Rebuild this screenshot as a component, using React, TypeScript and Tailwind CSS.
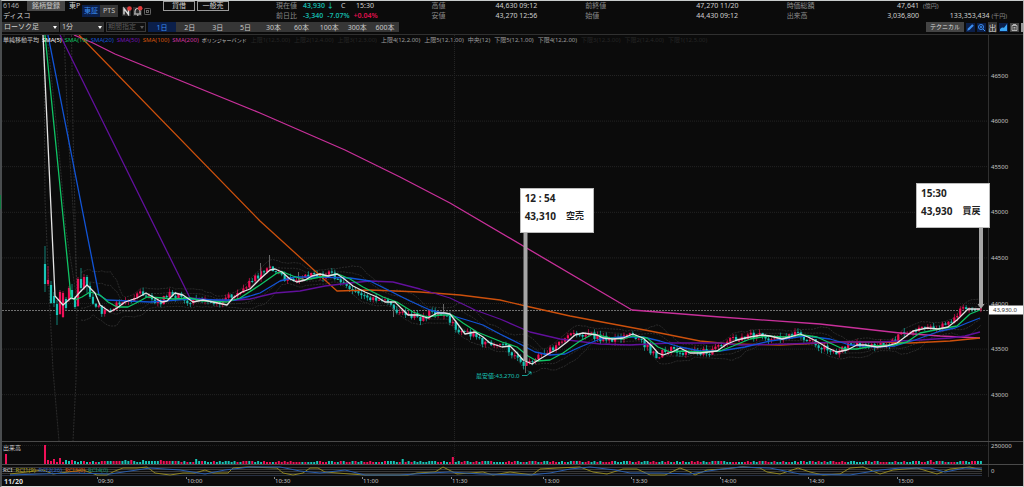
// Intraday chart screen: quote header, toolbar, candles with SMA / Bollinger, volume and RCI panes
import { useState } from 'react'
import clsx from 'clsx'

type Pt = [number, number]
const pts = (s: string): Pt[] => s.split(' ').map(p => p.split(',').map(Number) as Pt)

// Moving averages, in chart units
const SMA5 = '43,35 55,296 63,305 71,298 74,299 80,292 87,285 95,293 100,305 110,312 117,308 125,302 137,298 146,293 153,297 162,302 167,301 175,293 183,295 193,302 203,300 213,302 227,305 233,298 242,292 250,289 260,279 270,270 275,269 282,272 290,279 297,282 305,280 312,276 320,274 328,276 337,274 343,278 353,286 365,292 377,297 385,302 395,302 402,309 408,315 418,315 428,318 437,313 445,313 450,314 457,323 465,334 475,332 483,337 490,343 502,347 510,346 517,353 523,360 532,364 540,359 550,353 558,349 567,342 575,335 583,333 597,335 603,338 613,339 623,338 633,334 643,338 652,346 658,353 663,355 672,352 680,348 690,353 700,353 717,351 727,344 737,340 750,337 762,335 770,336 782,339 790,337 800,334 808,337 818,342 828,348 837,352 847,350 857,345 865,345 877,347 887,346 897,343 905,337 913,331 927,328 938,329 948,327 957,320 968,309 980,309'
const SMA10 = '45,35 71,297 75,300 82,297 90,292 100,295 108,302 117,307 128,307 138,302 147,297 163,298 173,299 190,298 203,301 227,302 240,298 260,285 277,273 283,272 293,276 305,280 320,277 338,274 350,279 363,287 383,297 397,302 413,312 427,317 440,315 452,315 463,323 477,332 502,342 517,347 528,356 537,361 550,360 563,353 580,341 593,334 610,338 623,339 633,336 647,338 658,347 670,352 683,351 700,352 720,351 733,346 750,339 767,336 783,337 803,335 817,337 830,343 843,349 857,349 873,346 893,345 907,342 920,333 940,329 957,326 970,314 980,310'
const SMA20 = '48,35 99,295 107,300 150,302 190,299 215,300 235,300 250,296 260,293 280,281 295,277 320,277 350,278 370,281 390,291 410,301 430,310 450,315 470,321 483,325 500,334 520,344 535,352 550,355 565,354 580,347 600,339 620,337 643,337 660,341 680,347 700,351 720,351 745,347 770,341 805,336 830,339 850,345 875,347 895,346 915,340 940,331 955,328 967,323 980,318'
const SMA50 = '60,35 190,298 225,301 250,299 275,293 300,291 325,286 350,283 370,281 393,282 420,289 450,298 475,310 500,319 530,332 560,339 600,344 630,345 670,343 720,343 740,345 790,344 840,342 880,342 920,340 950,338 965,336 980,332'
const SMA100 = '79,35 260,221 337,291 370,290 420,292 460,295 500,300 530,307 570,316 650,331 700,341 730,344 780,345 840,342 880,342 910,343 950,341 980,338'
const SMA200 = '74,35 93,43 115,54 260,113 345,150 400,177 450,203 632,310 720,317 820,324 900,333 940,336 980,338'

const RCI_FAST = '10,474 43,470 53,474 83,470 97,475 107,475 115,471 123,468 137,468 147,467 155,473 170,475 183,473 195,473 205,470 213,473 228,473 233,468 247,467 277,468 283,473 293,475 303,473 310,468 318,468 325,472 350,474 365,475 408,475 417,473 435,472 443,467 457,474 483,472 493,475 510,472 532,475 540,469 557,468 580,467 593,472 607,474 623,469 637,469 650,475 665,475 680,468 688,471 695,475 707,470 723,469 743,467 760,468 767,472 780,474 798,468 810,472 823,475 840,474 850,468 863,467 880,474 893,470 917,468 937,474 950,469 970,467 982,470'
const RCI_SLOW = '10,475 40,474 75,473 110,474 130,471 150,468 180,470 205,474 225,470 250,467 280,467 300,471 320,473 345,470 365,475 400,475 430,473 450,472 480,474 530,475 550,473 570,469 590,467 615,470 630,473 660,473 690,474 715,470 740,467 770,468 800,474 850,475 880,470 900,468 930,468 945,472 965,468 982,469'

const LINES = [
  { d: SMA200, color: '#c8309a' },
  { d: SMA100, color: '#cc500c' },
  { d: SMA50, color: '#62109c' },
  { d: SMA20, color: '#1254d6' },
  { d: SMA10, color: '#10c465' },
  { d: SMA5, color: '#e4e4e4' },
]

const UP = '#f01058'
const DOWN = '#18c4b6'

const noise = (n: number) => { const v = Math.sin(n * 127.1 + 11.7) * 43758.5453; return v - Math.floor(v) }
const at = (line: Pt[], x: number) => {
  const i = line.findIndex(p => p[0] >= x)
  if (i < 0) return line[line.length - 1][1]
  if (i === 0) return line[0][1]
  const [a, b] = [line[i - 1], line[i]]
  return a[1] + ((b[1] - a[1]) * (x - a[0])) / (b[0] - a[0])
}

type Candle = { x: number; open: number; close: number; top: number; bottom: number }

// The opening minutes swing too widely to be derived from the average
const OPENING: Candle[] = [
  { x: 45, open: 264, close: 284, top: 246, bottom: 292 },
  { x: 48, open: 284, close: 280, top: 266, bottom: 286 },
  { x: 51, open: 285, close: 303, top: 281, bottom: 304 },
  { x: 54, open: 296, close: 303, top: 292, bottom: 307 },
  { x: 57, open: 304, close: 315, top: 300, bottom: 325 },
  { x: 60, open: 314, close: 292, top: 290, bottom: 315 },
  { x: 63, open: 317, close: 293, top: 291, bottom: 318 },
  { x: 66, open: 299, close: 308, top: 297, bottom: 310 },
  { x: 69, open: 300, close: 288, top: 286, bottom: 302 },
  { x: 72, open: 290, close: 298, top: 284, bottom: 300 },
  { x: 75, open: 298, close: 307, top: 296, bottom: 309 },
  { x: 78, open: 306, close: 279, top: 277, bottom: 307 },
  { x: 81, open: 279, close: 288, top: 268, bottom: 292 },
  { x: 84, open: 288, close: 277, top: 274, bottom: 290 },
  { x: 87, open: 277, close: 286, top: 275, bottom: 293 },
]

const buildCandles = () => {
  const line = pts(SMA5)
  const out = [...OPENING]
  let prev = 286
  for (let i = 0; i <= 302; i++) {
    const x = 90 + i * 2.95
    if (x > 981) break
    const swing = x > 966 ? 1 : 7
    const close = at(line, x + 6) + (noise(i) - 0.5) * swing
    const hi = Math.min(prev, close)
    const lo = Math.max(prev, close)
    out.push({ x, open: prev, close, top: hi - noise(i + 400) * 4, bottom: lo + noise(i + 800) * 4 })
    prev = close
  }
  return out
}
const CANDLES = buildCandles()

// Bollinger bands over 12 closes
const band = (k: number) => CANDLES.slice(12).map((c, i) => {
  const win = CANDLES.slice(i + 1, i + 13).map(w => w.close)
  const mean = win.reduce((a, b) => a + b, 0) / win.length
  const sd = Math.sqrt(win.reduce((a, b) => a + (b - mean) ** 2, 0) / win.length)
  return `${c.x.toFixed(1)},${(mean + k * (sd + 1)).toFixed(1)}`
}).join(' ')
const BANDS = [-2, -1, 1, 2].map(band)

const TALL: Record<number, number> = { 0: 19, 3: 5, 5: 6, 138: 7, 51: 5, 121: 5, 300: 4 }
const PRICES = [46500, 46000, 45500, 45000, 44500, 44000, 43500, 43000]
const priceY = (p: number) => 75.5 + ((46500 - p) / 500) * 45.6

const TIMES = [
  ['09:30', 97], ['10:00', 186], ['10:30', 274], ['11:00', 362], ['11:30', 451],
  ['13:00', 543], ['13:30', 631], ['14:00', 720], ['14:30', 808], ['15:00', 897],
] as const

const PERIODS = ['1日', '2日', '3日', '5日', '30本', '60本', '100本', '300本', '600本']

const SMA_LEGEND = [
  ['単純移動平均', 'text-[#c4c4c4]'],
  ['SMA(5)', 'text-white'],
  ['SMA(10)', 'text-[#10c465]'],
  ['SMA(20)', 'text-[#1254d6]'],
  ['SMA(50)', 'text-[#7014b4]'],
  ['SMA(100)', 'text-[#d9560c]'],
  ['SMA(200)', 'text-[#d033a0]'],
  ['ボリンジャーバンド', 'text-[5px] text-[#c4c4c4]'],
]
const BAND_LEGEND = [
  ['上限1(12,5.00)', 'text-[#262626]'],
  ['上限2(12,4.00)', 'text-[#262626]'],
  ['上限3(12,3.00)', 'text-[#262626]'],
  ['上限4(12,2.00)', 'text-[#9c9c9c]'],
  ['上限5(12,1.00)', 'text-[#9c9c9c]'],
  ['中央(12)', 'text-[#9c9c9c]'],
  ['下限5(12,1.00)', 'text-[#9c9c9c]'],
  ['下限4(12,2.00)', 'text-[#9c9c9c]'],
  ['下限3(12,3.00)', 'text-[#262626]'],
  ['下限2(12,4.00)', 'text-[#262626]'],
  ['下限1(12,5.00)', 'text-[#262626]'],
]

const Label = ({ children }: { children: string }) => <dt className="text-[#8a8a8a]">{children}</dt>

function Quote() {
  return (
    <div className="grid flex-1 grid-cols-[156fr_154fr_202fr_237fr] text-[7px] leading-[10px] text-[#d0d0d0]">
      <dl className="grid grid-cols-[27px_1fr]">
        <Label>現在値</Label>
        <dd className="flex text-[#14b5a8]"><b className="w-[38px] font-semibold">43,930 ↓</b><span className="w-[15px] text-[#d0d0d0]">C</span><span className="text-[#d0d0d0]">15:30</span></dd>
        <Label>前日比</Label>
        <dd className="flex gap-1 font-semibold text-[#14b5a8]"><span>-3,340</span><span>-7.07%</span><span className="text-[#e0104f]">+0.04%</span></dd>
      </dl>
      <dl className="grid grid-cols-[1fr_auto] pr-12">
        <Label>高値</Label><dd>44,630 09:12</dd>
        <Label>安値</Label><dd>43,270 12:56</dd>
      </dl>
      <dl className="grid grid-cols-[1fr_auto] pr-12">
        <Label>前終値</Label><dd>47,270 11/20</dd>
        <Label>始値</Label><dd>44,430 09:12</dd>
      </dl>
      <dl className="grid grid-cols-[1fr_auto_84px] gap-x-1 pr-4">
        <Label>時価総額</Label><dd className="text-right">47,641</dd><dd className="text-[6px] text-[#8a8a8a]">(億円)</dd>
        <Label>出来高</Label><dd className="text-right">3,036,800</dd>
        <dd className="text-right">133,353,434 <span className="text-[6px] text-[#8a8a8a]">(千円)</span></dd>
      </dl>
    </div>
  )
}

function Header() {
  const [market, setMarket] = useState('東証')
  return (
    <div className="flex h-5 text-[7px] leading-[10px]">
      <div className="w-20 shrink-0 pl-px">
        <div className="flex">
          <span className="w-6 text-[#a8a8a8]">6146</span>
          <button className="h-[10px] w-[38px] bg-[#484848] text-[#c4c4c4]">銘柄登録</button>
          <span className="ml-1 whitespace-nowrap">東P</span>
        </div>
        <div>ディスコ</div>
      </div>
      <div className="mt-1 flex h-3 shrink-0 items-center">
        {['東証', 'PTS'].map(m => (
          <button key={m} onClick={() => setMarket(m)} className={clsx('h-3 w-[18px]', m === market ? 'bg-[#0b1f4a] text-[#3b8ef0]' : 'bg-[#363636] text-[#c4c4c4]')}>{m}</button>
        ))}
        <button aria-label="ニュース" className="ml-1">
          <svg width="10" height="10" viewBox="0 0 10 10" className="block">
            <rect y="1" width="9" height="9" fill="#2c2c2c" />
            <path d="M2 8.5V2.5L6.500 8.5V2.5" fill="none" stroke="#ddd" strokeWidth="1.4" />
            <circle cx="7.5" cy="2.5" r="2.3" fill="#e23b3b" />
          </svg>
        </button>
        <button aria-label="アラート" className="ml-px">
          <svg width="10" height="10" viewBox="0 0 10 10" className="block">
            <rect y="1" width="9" height="9" fill="#2c2c2c" />
            <path d="M1 8H8M2 7.5V5A2.5 2.5 0 0 1 7 5V7.5M4 9.2H5.4" fill="none" stroke="#ddd" />
            <circle cx="7.2" cy="2.3" r="2.3" fill="#e23b3b" />
          </svg>
        </button>
        <button aria-label="設定" className="ml-px">
          <svg width="7" height="7" viewBox="0 0 8 8" className="block" fill="none" stroke="#777">
            <rect x="0.5" y="0.5" width="7" height="7" rx="1" /><rect x="2.8" y="2.8" width="2.4" height="2.4" />
          </svg>
        </button>
      </div>
      <div className="ml-3 flex w-[113px] shrink-0 items-start gap-0.5">
        <button className="h-[10px] w-8 border border-[#9a9a9a] leading-[8px]">貸借</button>
        <button className="h-[10px] w-8 border border-[#9a9a9a] leading-[8px]">一般売</button>
      </div>
      <Quote />
    </div>
  )
}

function Picker({ label, value, className, disabled }: { label: string; value: string; className: string; disabled?: boolean }) {
  return (
    <div className={clsx('relative h-[10px]', className)}>
      <select aria-label={label} disabled={disabled}
        className={clsx('block h-[10px] w-full appearance-none border pl-px text-[7px] leading-[8px] opacity-100', disabled ? 'border-[#3a3a3a] bg-[#101010] text-[#5a5a5a]' : 'border-[#333333] bg-[#303030] text-[#d0d0d0]')}>
        <option>{value}</option>
      </select>
      <svg viewBox="0 0 4 3" className={clsx('pointer-events-none absolute top-1 right-0.5 h-[3px] w-1', disabled ? 'fill-[#5a5a5a]' : 'fill-white')}><path d="M0 0H4L2 3Z" /></svg>
    </div>
  )
}

function Toolbar() {
  const [period, setPeriod] = useState('1日')
  return (
    <div className="flex h-[13px] items-start pt-px text-[7px] leading-[9px]">
      <Picker label="チャート種別" value="ローソク足" className="w-[57px]" />
      <Picker label="足種" value="1分" className="ml-px w-11" />
      <Picker label="期間指定" value="期間指定" className="ml-0.5 w-10" disabled />
      <div className="ml-0.5 grid w-[251px] grid-cols-9">
        {PERIODS.map(p => (
          <button key={p} onClick={() => setPeriod(p)} className={clsx('h-[10px]', p === period ? 'bg-[#0b1f4a] text-[#3b8ef0]' : 'bg-[#363636] text-[#c8c8c8]')}>{p}</button>
        ))}
      </div>
      <div className="ml-auto flex items-center gap-0.5">
        <button className="h-[10px] w-[38px] bg-[#444444] text-[6px] text-[#dddddd]">テクニカル</button>
        <button aria-label="描画">
          <svg width="9" height="9" viewBox="0 0 9 9" className="block"><rect width="9" height="9" fill="#0b1f4a" /><path d="M1.2 7.8L1.9 5.6L6.2 1.2L7.8 2.8L3.4 7.1Z" fill="#3b8ef0" /></svg>
        </button>
        <button aria-label="拡大">
          <svg width="9" height="9" viewBox="0 0 9 9" className="block"><rect width="9" height="9" fill="#0b1f4a" /><circle cx="4" cy="4" r="2.5" fill="none" stroke="#3b8ef0" /><path d="M6 6L8 8M3 4H5M4 3V5" stroke="#3b8ef0" /></svg>
        </button>
        <button className="h-[10px] w-[9px] bg-[#363636] text-[8px] text-[#dddddd]">出</button>
        <button aria-label="チャート">
          <svg width="9" height="9" viewBox="0 0 9 9" className="block"><rect width="9" height="9" fill="#0b1f4a" /><path d="M1 8V6L3 4.600L5 4.800L8 1V8Z" fill="#3ba6f5" /></svg>
        </button>
        <button aria-label="メモ">
          <svg width="9" height="9" viewBox="0 0 9 9" className="block"><rect width="9" height="9" fill="#444" /><path d="M2 2.5H7V7.5H2ZM3.5 4.5H5.5M3.5 6H5.5M3 1.5H6" fill="none" stroke="#ccc" strokeWidth="0.8" /></svg>
        </button>
        <span className="h-[9px] w-0.5 bg-[#999999]" />
      </div>
    </div>
  )
}

function PriceChart() {
  return (
    <svg viewBox="2 35 986 406" className="block h-auto w-full" role="img" aria-label="株価チャート">
      <g stroke="#242424" strokeDasharray="1 1">
        {PRICES.map(p => <path key={p} d={`M2 ${priceY(p)}H988`} />)}
        <path d="M454.5 35V441" />
      </g>
      {/* bands during the opening gap */}
      <g fill="none" stroke="#343434" strokeWidth="0.8" strokeDasharray="2 1">
        <path d="M44 35L45 200L49 290L53 370L59 441" />
        <path d="M47 35L58 140L66 230L77 300" />
        <path d="M64 35L68 130L75 240L77 300" />
        <path d="M71.500 35L73 130L77 300L76 380L73 441" />
        {BANDS.map((b, i) => <polyline key={i} points={b} />)}
      </g>
      <path d="M2 310.500H988" stroke="#8c8c8c" strokeWidth="0.8" strokeDasharray="2 1" />
      {CANDLES.map((c, i) => {
        const color = c.close < c.open ? UP : DOWN
        return (
          <g key={i} fill={color}>
            <rect x={c.x - 0.4} y={c.top} width="0.8" height={c.bottom - c.top} opacity="0.8" />
            <rect x={c.x - 1.1} y={Math.min(c.open, c.close)} width="2.2" height={Math.max(1, Math.abs(c.open - c.close))} />
          </g>
        )
      })}
      <path d="M260.500 263V275M269.500 255V268M298.500 272V282M393.500 308V317M443.500 304V314M525.500 362V373" stroke="#666" />
      {LINES.map(l => <polyline key={l.color} points={l.d} fill="none" stroke={l.color} strokeWidth="1.3" strokeLinejoin="round" />)}
      <text x="476" y="378" fontSize="6" fill={DOWN}>最安値:43,270.0</text>
      <path d="M522 375.500H527L531 372M528.500 372H531V374.500" fill="none" stroke={DOWN} strokeWidth="0.8" />
      {/* leaders from the notes */}
      <path d="M525.500 232V361" stroke="#a6a6a6" strokeWidth="4" />
      <path d="M981 227V305" stroke="#a6a6a6" strokeWidth="4" />
      <path d="M977.500 304H984.500L981 309Z" fill="#a6a6a6" />
    </svg>
  )
}

function Note({ time, price, action, className }: { time: string; price: string; action: string; className: string }) {
  return (
    <div className={clsx('absolute h-[45px] w-[74px] border border-[#bbbbbb] bg-white pl-1 text-[10px] leading-[18px] font-bold text-[#222222]', className)}>
      <div>{time}</div>
      <div className="flex gap-2.5 whitespace-nowrap"><span>{price}</span><span className="text-[9px]">{action}</span></div>
    </div>
  )
}

export default function App() {
  return (
    <div lang="ja" className="relative border-t border-r border-b border-l-2 border-t-[#c8cccc] border-r-[#b0b0b0] border-b-[#dddddd] border-l-[#4a4d4f] bg-[#0b0b0b] font-['Noto_Sans','Noto_Sans_CJK_JP',sans-serif] text-[#d0d0d0]">
      <span className="absolute top-[40%] -left-0.5 h-[14px] w-px bg-[#107c41]" />
      <Header />
      <Toolbar />

      <main className="border-t border-[#303030]">
        <section className="flex border-b border-[#4a4a4a]">
          <div className="relative min-w-0 flex-1">
            <PriceChart />
            <div className="absolute top-0 left-px flex gap-1 text-[6px] leading-[11px] whitespace-nowrap">
              <div className="flex gap-[3px]">
                {SMA_LEGEND.map(([text, color]) => <span key={text} className={color}>{text}</span>)}
              </div>
              {BAND_LEGEND.map(([text, color]) => <span key={text} className={color}>{text}</span>)}
            </div>
            <Note time="12 : 54" price="43,310" action="空売" className="top-[37.7%] left-[52.5%]" />
            <Note time="15:30" price="43,930" action="買戻" className="top-[36.5%] -right-0.5 z-10" />
          </div>
          <div className="relative w-[35px] shrink-0 border-l border-[#303030] text-[6px] leading-[8px] text-[#c4c4c4]">
            {PRICES.map(p => (
              <span key={p} className="absolute left-0.5 -translate-y-1/2" style={{ top: `${((priceY(p) - 35) / 406) * 100}%` }}>{p}</span>
            ))}
            <span className="absolute top-[67.8%] right-0 left-0 -translate-y-1/2 bg-white pl-1 leading-[9px] text-[#333333]">43,930.0</span>
          </div>
        </section>

        <section className="flex border-b border-[#4a4a4a]">
          <div className="relative min-w-0 flex-1">
            <svg viewBox="2 442 986 22" className="block h-auto w-full" role="img" aria-label="出来高">
              <path d="M2 445.500H988M454.500 442V464" stroke="#1e1e1e" strokeDasharray="1 1" />
              <rect x="5" y="454" width="2" height="10" fill={UP} />
              {CANDLES.map((c, i) => {
                const h = TALL[i] ?? 2 + Math.round(noise(i + 50) * (i < 40 ? 2 : 1))
                return <rect key={i} x={c.x - 1} y={464 - h} width="2" height={h} fill={i === 0 || i === 138 || noise(i + 9) > 0.5 ? UP : DOWN} />
              })}
            </svg>
            <span className="absolute top-px left-px text-[6px] leading-[10px]">出来高</span>
          </div>
          <div className="w-[35px] shrink-0 border-l border-[#303030] pl-0.5 text-[6px] leading-[8px] text-[#c4c4c4]">250000</div>
        </section>

        <section className="flex">
          <div className="relative min-w-0 flex-1">
            <svg viewBox="2 465 986 12" className="block h-auto w-full" role="img" aria-label="RCI">
              <path d="M2 467.500H982M2 469.500H982M2 471.500H982M2 473.500H982" stroke="#4a4a4a" strokeWidth="0.7" />
              <path d="M2 475.500H982" stroke="#33405a" strokeWidth="0.7" />
              <polyline points={RCI_FAST} fill="none" stroke="#8f8420" />
              <polyline points={RCI_SLOW} fill="none" stroke="#285cad" />
            </svg>
            <div className="absolute top-0 left-px flex gap-[3px] text-[6px] leading-[11px] whitespace-nowrap">
              <span>RCI</span>
              <span className="text-[#b3a51e]">RCI1(9)</span>
              <span className="text-[#2a63c4]">RCI2(26)</span>
              <span className="text-[#d9560c]">RCI3(0)</span>
              <span className="text-[#108a68]">RCI4(0)</span>
            </div>
          </div>
          <div className="w-[35px] shrink-0 border-l border-[#303030] pt-0.5 pl-0.5 text-[6px] leading-[8px] text-[#c4c4c4]">0</div>
        </section>

        <div className="relative mr-[35px] h-[9px] text-[6px] leading-[9px] text-[#c4c4c4]">
          <b className="absolute left-0.5 text-[7px] text-[#dddddd]">11/20</b>
          {TIMES.map(([t, x]) => (
            <span key={t} className="absolute" style={{ left: `${((x - 2) / 986) * 100}%` }}>
              <i className="absolute top-0 left-0 h-0.5 w-px bg-[#888888]" /><span className="pl-px">{t}</span>
            </span>
          ))}
        </div>
      </main>
    </div>
  )
}
